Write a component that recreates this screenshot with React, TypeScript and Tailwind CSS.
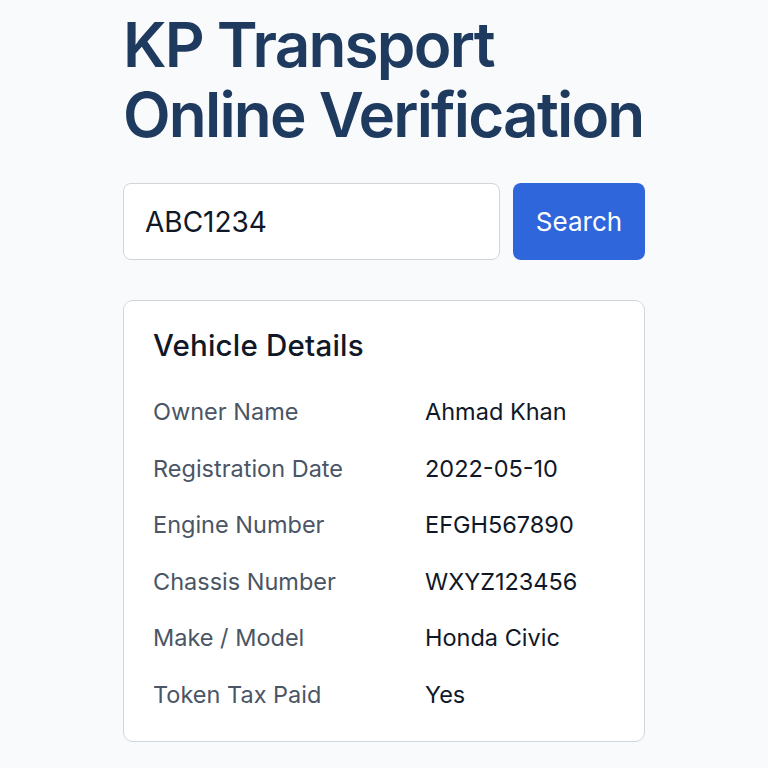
import { useState } from 'react';

interface DetailRow {
  label: string;
  value: string;
}

const details: DetailRow[] = [
  { label: 'Owner Name', value: 'Ahmad Khan' },
  { label: 'Registration Date', value: '2022-05-10' },
  { label: 'Engine Number', value: 'EFGH567890' },
  { label: 'Chassis Number', value: 'WXYZ123456' },
  { label: 'Make / Model', value: 'Honda Civic' },
  { label: 'Token Tax Paid', value: 'Yes' },
];

const App = () => {
  const [query, setQuery] = useState('ABC1234');

  return (
    <div className="min-h-[768px] bg-[#f9fafb] font-['Inter',sans-serif]">
      <div className="mx-auto w-[522px] pt-[10px]">
        <h1 className="whitespace-nowrap text-[62px] leading-[70px] font-semibold tracking-[-1.8px] text-[#1e3a5f]">
          KP Transport
          <br />
          Online Verification
        </h1>

        <div className="mt-[33px] flex gap-[13px]">
          <input
            value={query}
            onChange={(e) => setQuery(e.target.value)}
            className="h-[77px] w-[377px] rounded-lg border border-gray-300 bg-white px-[21px] text-[28px] text-gray-900 outline-none"
          />
          <button className="flex h-[77px] w-[132px] items-center justify-center rounded-lg bg-[#2f66dc] text-[26px] text-white">
            Search
          </button>
        </div>

        <div className="mt-[40px] rounded-[10px] border border-gray-300 bg-white px-[29px] pt-[26px] pb-[29px]">
          <h2 className="text-[29.5px] leading-[36px] font-medium tracking-[0.2px] text-gray-900">Vehicle Details</h2>
          <div className="mt-[32px] flex flex-col gap-[22.6px]">
            {details.map((row) => (
              <div key={row.label} className="flex text-[23.5px] leading-[34px]">
                <span className="w-[272px] text-gray-600">{row.label}</span>
                <span className="text-gray-900">{row.value}</span>
              </div>
            ))}
          </div>
        </div>
      </div>
    </div>
  );
};

export default App;
